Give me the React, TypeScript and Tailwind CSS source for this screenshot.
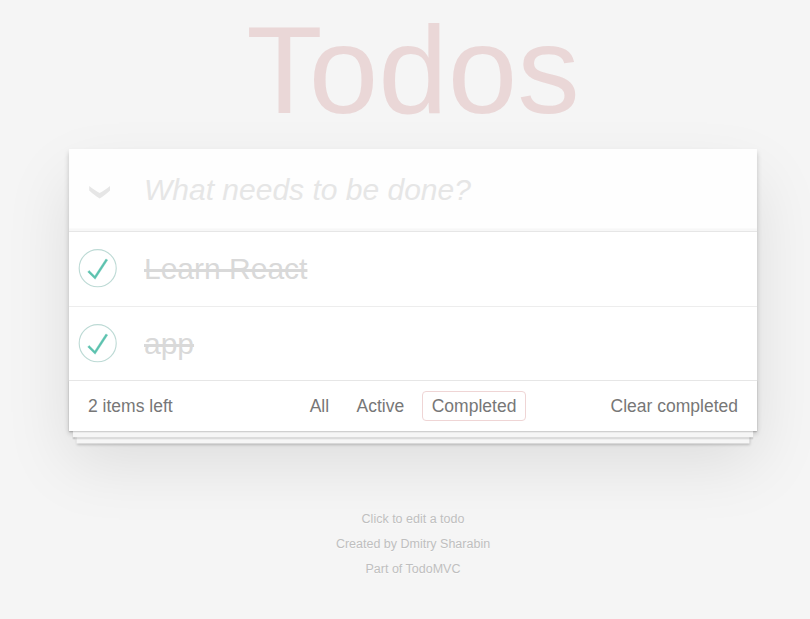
import React, { useState } from "react";

const items = ["Learn React", "app"];
const filters = ["All", "Active", "Completed"];

export default function App() {
  const [filter, setFilter] = useState("Completed");
  return (
    <div className="min-h-screen overflow-hidden bg-[#f5f5f5] pl-[69px] font-['Liberation_Sans',Arial,sans-serif] text-[#4d4d4d]">
      <div className="w-[688px]">
        <h1 className="h-[149px] text-center text-[125px] leading-[140px] text-[#af2f2f]/15">Todos</h1>
        <section className="bg-white shadow-[0_2.5px_5px_0_rgba(0,0,0,0.2),0_31.25px_62.5px_0_rgba(0,0,0,0.1)]">
          <header className="flex h-[82px] items-center bg-[#fefefe] pb-[2px] shadow-[inset_0_-2.5px_1.25px_rgba(0,0,0,0.03)]">
            <button className="w-[75px] pt-[6px] pl-[20px]" aria-label="Mark all as complete">
              <svg viewBox="0 0 22 13" className="h-[13px] w-[22px]" fill="#e6e6e6">
                <path d="M0.2 0C3.5 2.6 7.2 5 10.7 6.9C14.2 5 17.8 2.6 21 0V4.6C17.8 7.7 14.4 10.3 10.7 12.4C7 10.3 3.4 7.7 0.2 4.6Z" />
              </svg>
            </button>
            <input
              className="min-w-0 flex-1 text-[30px] outline-none placeholder:text-[#e6e6e6] placeholder:italic"
              placeholder="What needs to be done?"
            />
          </header>
          <ul className="border-t border-[#e6e6e6]">
            {items.map((t) => (
              <li
                key={t}
                className="flex h-[75px] items-center border-b border-[#ededed] pb-[2px] text-[30px] text-[#d9d9d9] last:h-[73px] last:border-0 last:pb-[1px]"
              >
                <svg viewBox="-10 -18 100 135" className="h-[50px] w-[50px]" fill="none">
                  <circle cx="50" cy="50" r="50" stroke="#bddad5" strokeWidth="3" />
                  <path fill="#5dc2af" stroke="#5dc2af" strokeWidth="1" d="M72 25L42 71 27 56l-4 4 20 20 34-52z" />
                </svg>
                <span className="ml-[25px] line-through">{t}</span>
              </li>
            ))}
          </ul>
          <footer className="grid h-[51px] grid-cols-[1fr_auto_1fr] items-center border-t border-[#e6e6e6] px-[19px] text-[17.5px] text-[#777] shadow-[0_1.25px_1.25px_rgba(0,0,0,0.2),0_10px_0_-3.75px_#f6f6f6,0_11.25px_1.25px_-3.75px_rgba(0,0,0,0.2),0_20px_0_-7.5px_#f6f6f6,0_21.25px_2.5px_-7.5px_rgba(0,0,0,0.2)]">
            <span>2 items left</span>
            <nav className="flex gap-[8px]">
              {filters.map((f) => (
                <button
                  key={f}
                  onClick={() => setFilter(f)}
                  className={`h-[30px] rounded-[4px] border px-[8.75px] leading-[28px] ${
                    filter === f ? "border-[#efd5d5]" : "border-transparent"
                  }`}
                >
                  {f}
                </button>
              ))}
            </nav>
            <button className="justify-self-end">Clear completed</button>
          </footer>
        </section>
        <footer className="mt-[76px] text-center text-[12.5px] leading-[25px] text-[#bfbfbf] [text-shadow:0_1px_0_rgba(255,255,255,0.5)]">
          <p>Click to edit a todo</p>
          <p>Created by Dmitry Sharabin</p>
          <p>Part of TodoMVC</p>
        </footer>
      </div>
    </div>
  );
}
